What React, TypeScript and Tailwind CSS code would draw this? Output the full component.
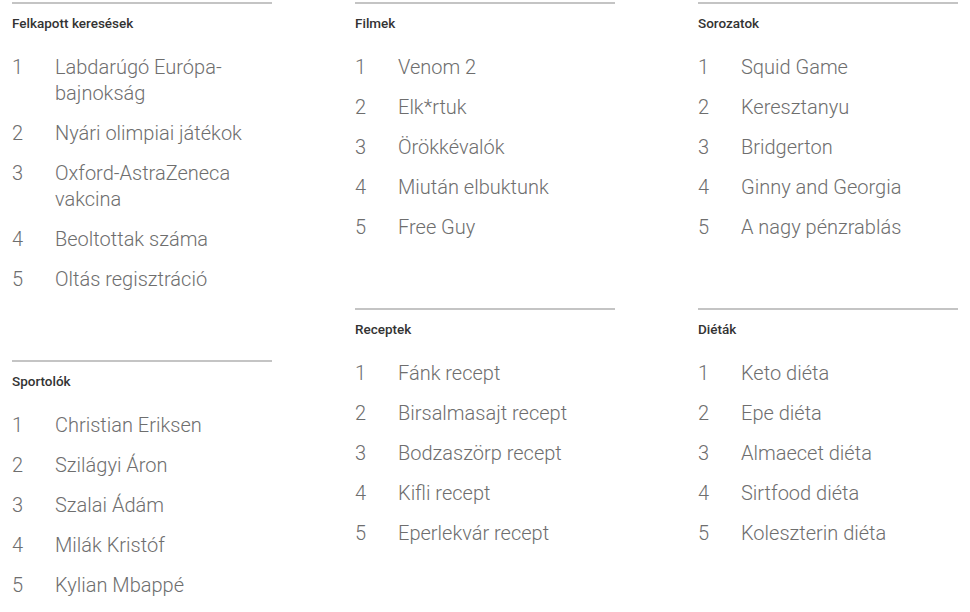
const sections: { title: string; items: string[] }[][] = [
  [
    {
      title: 'Felkapott keresések',
      items: [
        'Labdarúgó Európa-bajnokság',
        'Nyári olimpiai játékok',
        'Oxford-AstraZeneca vakcina',
        'Beoltottak száma',
        'Oltás regisztráció',
      ],
    },
    {
      title: 'Sportolók',
      items: [
        'Christian Eriksen',
        'Szilágyi Áron',
        'Szalai Ádám',
        'Milák Kristóf',
        'Kylian Mbappé',
      ],
    },
  ],
  [
    {
      title: 'Filmek',
      items: ['Venom 2', 'Elk*rtuk', 'Örökkévalók', 'Miután elbuktunk', 'Free Guy'],
    },
    {
      title: 'Receptek',
      items: [
        'Fánk recept',
        'Birsalmasajt recept',
        'Bodzaszörp recept',
        'Kifli recept',
        'Eperlekvár recept',
      ],
    },
  ],
  [
    {
      title: 'Sorozatok',
      items: [
        'Squid Game',
        'Keresztanyu',
        'Bridgerton',
        'Ginny and Georgia',
        'A nagy pénzrablás',
      ],
    },
    {
      title: 'Diéták',
      items: [
        'Keto diéta',
        'Epe diéta',
        'Almaecet diéta',
        'Sirtfood diéta',
        'Koleszterin diéta',
      ],
    },
  ],
];

const TrendList = ({ title, items }: { title: string; items: string[] }) => {
  return (
    <section className="border-t-2 border-[#c4c4c4] mb-[61px]">
      <h3 className="pt-[11px] text-[13.5px] leading-4 font-medium text-[#333333]">
        {title}
      </h3>
      <ol className="mt-4">
        {items.map((item, i) => (
          <li key={item} className="flex py-[7px] text-[20px] leading-[26px] font-light text-[#6e6e6e]">
            <span className="w-[43px] shrink-0">{i + 1}</span>
            <span>{item}</span>
          </li>
        ))}
      </ol>
    </section>
  );
};

export default function App() {
  return (
    <div className="w-[970px] h-[612px] overflow-hidden bg-white pt-[2px] px-3 font-['Roboto',sans-serif]">
      <div className="flex gap-[83px]">
        {sections.map((col, ci) => (
          <div key={ci} className="w-[260px] shrink-0">
            {col.map((s) => (
              <TrendList key={s.title} title={s.title} items={s.items} />
            ))}
          </div>
        ))}
      </div>
    </div>
  );
}
